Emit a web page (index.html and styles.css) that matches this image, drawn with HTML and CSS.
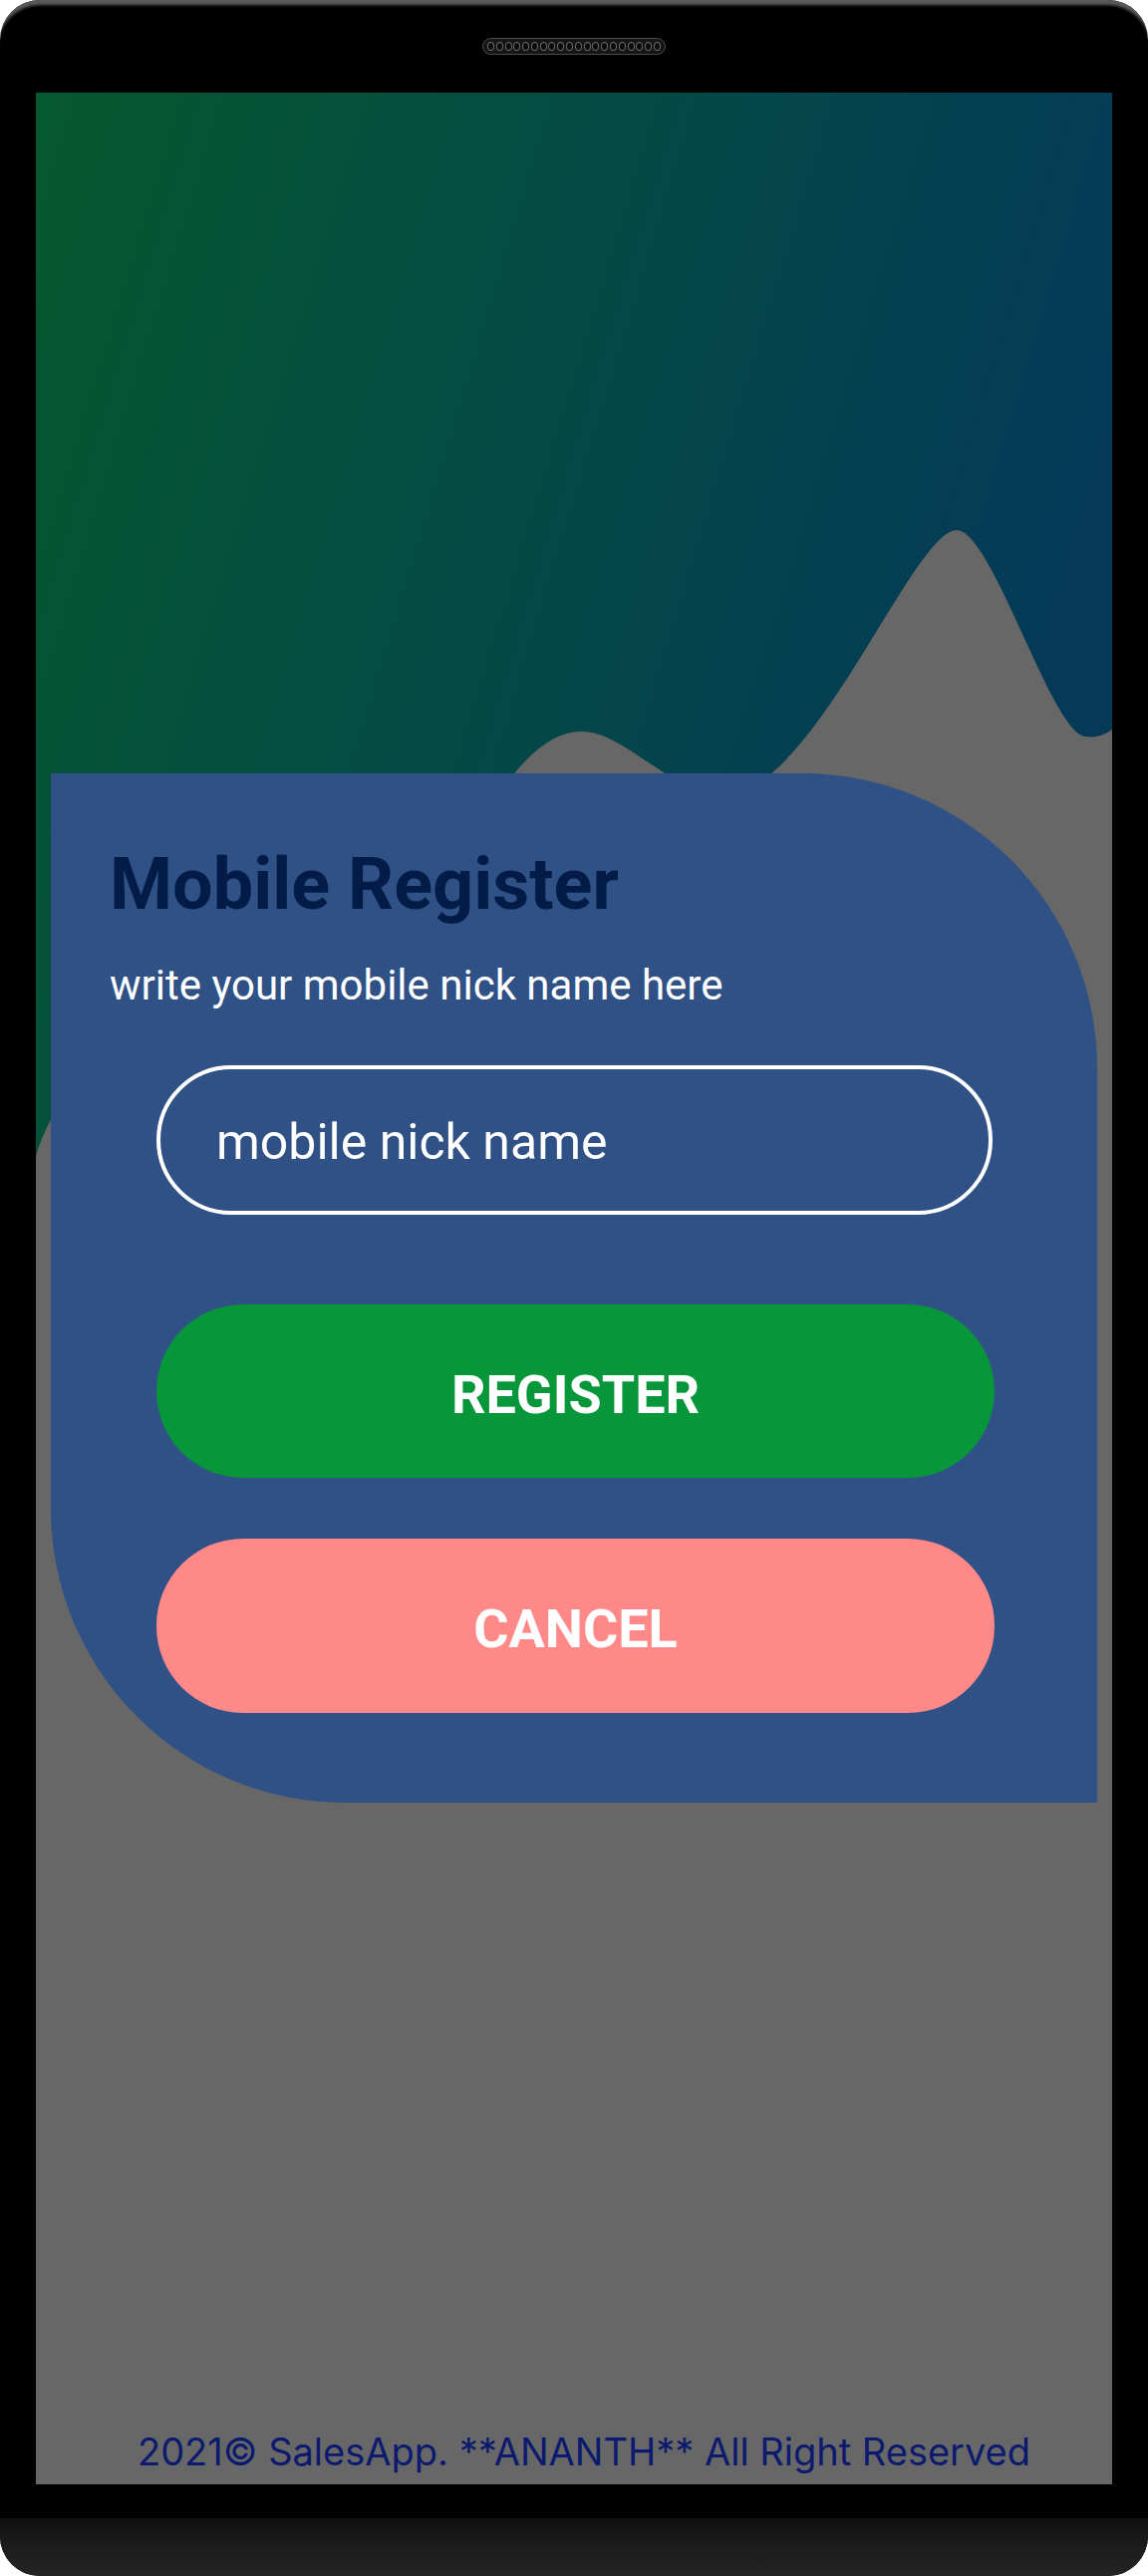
FILE: index.html
```html
<!DOCTYPE html>
<html lang="en">
<head>
<meta charset="utf-8">
<title>Mobile Register</title>
<link rel="stylesheet" href="styles.css">
</head>
<body>
<div class="phone">
  <div class="bezel-top">
    <div class="speaker">
      <span></span><span></span><span></span><span></span><span></span>
      <span></span><span></span><span></span><span></span><span></span>
      <span></span><span></span><span></span><span></span><span></span>
      <span></span><span></span><span></span><span></span><span></span>
    </div>
  </div>
  <div class="screen">
    <svg class="wave" viewBox="0 0 1080 1100" width="1080" height="1100" aria-hidden="true">
      <defs>
        <linearGradient id="wg" x1="0" y1="0" x2="1" y2="0.3">
          <stop offset="0" stop-color="#05592f"/>
          <stop offset="0.5" stop-color="#054a45"/>
          <stop offset="1" stop-color="#043a58"/>
        </linearGradient>
      </defs>
      <path fill="url(#wg)" d="M0,0 L1080,0 L1080,639 C1072,645 1062,648 1054,646 C1020,646 960,439 924,439 C880,439 780,705 690,705 C640,705 590,641 548,641 C505,641 470,690 430,760 C250,1000 60,880 0,1067 Z"/>
    </svg>
    <div class="card">
      <h1 class="title">Mobile Register</h1>
      <p class="subtitle">write your mobile nick name here</p>
      <div class="form">
        <input class="field" type="text" placeholder="mobile nick name">
        <button class="btn btn-register" type="button">REGISTER</button>
        <button class="btn btn-cancel" type="button">CANCEL</button>
      </div>
    </div>
    <div class="spacer"></div>
    <p class="footer">2021© SalesApp. **ANANTH** All Right Reserved</p>
  </div>
  <div class="bezel-bottom"></div>
  <div class="chin"></div>
</div>
</body>
</html>
```
FILE: styles.css
```css
* { box-sizing: border-box; }

html, body {
  margin: 0;
  padding: 0;
  background: #ffffff;
}

body {
  font-family: Roboto, "Liberation Sans", sans-serif;
}

.phone {
  width: 1152px;
  height: 2585px;
  background: #000;
  border-radius: 40px;
  overflow: hidden;
  box-shadow: inset 0 7px 3px -2px #5a5a5a;
  display: flex;
  flex-direction: column;
}

.bezel-top {
  height: 93px;
  display: flex;
  justify-content: center;
  padding-top: 38px;
}

.speaker {
  width: 184px;
  height: 17px;
  border-radius: 9px;
  background: #151515;
  border: 1px solid #4a4a4a;
  display: flex;
  align-items: center;
  justify-content: space-between;
  padding: 0 4px;
}

.speaker span {
  width: 7px;
  height: 9px;
  border-radius: 50%;
  background: #0a0a0a;
  border: 1px solid #6a6a6a;
}

.screen {
  position: relative;
  margin: 0 36px;
  width: 1080px;
  height: 2400px;
  background: #676767;
  display: flex;
  flex-direction: column;
}

.wave {
  position: absolute;
  top: 0;
  left: 0;
  display: block;
}

.card {
  position: relative;
  z-index: 1;
  margin-top: 683px;
  margin-left: 15px;
  width: 1050px;
  height: 1033px;
  background: #2f5185;
  border-radius: 0 296px 0 295px;
  padding: 67px 0 0 59px;
}

.title {
  margin: 0;
  font-family: Roboto, sans-serif;
  font-weight: 700;
  font-size: 72px;
  line-height: 90px;
  color: #031b47;
}

.subtitle {
  margin: 31px 0 0 0;
  font-family: Roboto, sans-serif;
  font-weight: 400;
  font-size: 42px;
  line-height: 50px;
  color: #ffffff;
}

.form {
  margin: 55px 0 0 47px;
  width: 840px;
  display: flex;
  flex-direction: column;
}

.field {
  width: 839px;
  height: 150px;
  border: 4px solid #ffffff;
  border-radius: 75px;
  background: transparent;
  padding: 4px 0 0 56px;
  font-family: Roboto, sans-serif;
  font-size: 50px;
  color: #ffffff;
  outline: none;
}

.field::placeholder {
  color: #ffffff;
  opacity: 1;
}

.btn {
  width: 841px;
  height: 174px;
  border: none;
  border-radius: 87px;
  font-family: Roboto, sans-serif;
  font-weight: 700;
  font-size: 54px;
  color: #ffffff;
  padding: 6px 0 0 0;
  margin: 0;
}

.btn-register {
  margin-top: 90px;
  background: #08963b;
}

.btn-cancel {
  margin-top: 61px;
  height: 175px;
  background: #ff8888;
}

.spacer {
  flex: 1;
}

.footer {
  margin: 0;
  padding: 0 0 10px 20px;
  text-align: center;
  font-family: Inter, "Noto Sans", sans-serif;
  font-size: 38px;
  line-height: 46px;
  color: #0c1a6e;
}

.bezel-bottom {
  height: 34px;
  background: #000;
}

.chin {
  flex: 1;
  background: linear-gradient(to bottom, #0f0f0f 0%, #1c1c1c 50%, #242424 100%);
}
```
